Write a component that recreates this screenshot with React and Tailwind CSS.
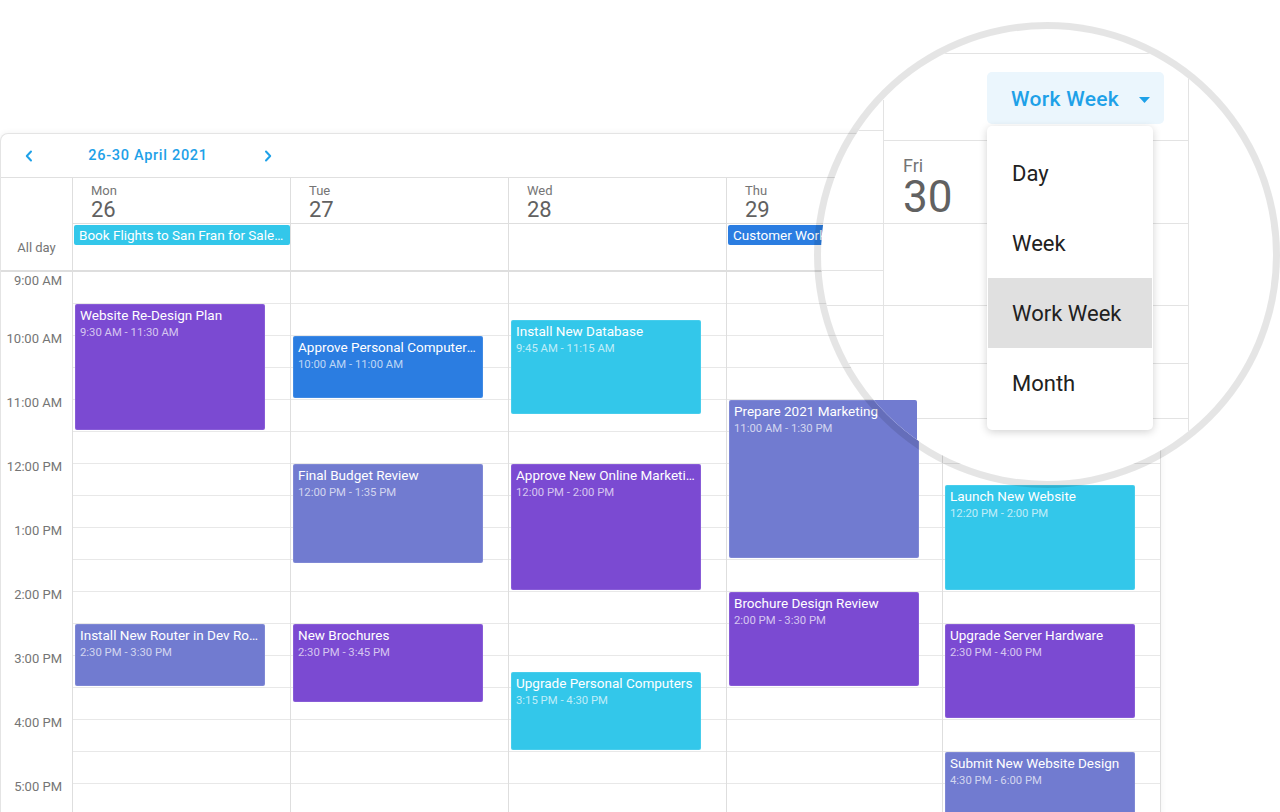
import React from "react";

const COLORS = {
  purple: "bg-[#7b4ad2]",
  indigo: "bg-[#717bd0]",
  cyan: "bg-[#33c7ea]",
  blue: "bg-[#2b7de1]",
};

const DAYS = [
  { name: "Mon", num: "26" },
  { name: "Tue", num: "27" },
  { name: "Wed", num: "28" },
  { name: "Thu", num: "29" },
  { name: "Fri", num: "30" },
];

const EVENTS = [
  { col: 0, title: "Website Re-Design Plan", time: "9:30 AM - 11:30 AM", s: 9.5, e: 11.5, c: "purple" },
  { col: 0, title: "Install New Router in Dev Room", time: "2:30 PM - 3:30 PM", s: 14.5, e: 15.5, c: "indigo" },
  { col: 1, title: "Approve Personal Computers Upgrade Plan", time: "10:00 AM - 11:00 AM", s: 10, e: 11, c: "blue" },
  { col: 1, title: "Final Budget Review", time: "12:00 PM - 1:35 PM", s: 12, e: 13 + 35 / 60, c: "indigo" },
  { col: 1, title: "New Brochures", time: "2:30 PM - 3:45 PM", s: 14.5, e: 15.75, c: "purple" },
  { col: 2, title: "Install New Database", time: "9:45 AM - 11:15 AM", s: 9.75, e: 11.25, c: "cyan" },
  { col: 2, title: "Approve New Online Marketing Strategy", time: "12:00 PM - 2:00 PM", s: 12, e: 14, c: "purple" },
  { col: 2, title: "Upgrade Personal Computers", time: "3:15 PM - 4:30 PM", s: 15.25, e: 16.5, c: "cyan" },
  { col: 3, title: "Prepare 2021 Marketing", time: "11:00 AM - 1:30 PM", s: 11, e: 13.5, c: "indigo" },
  { col: 3, title: "Brochure Design Review", time: "2:00 PM - 3:30 PM", s: 14, e: 15.5, c: "purple" },
  { col: 4, title: "Launch New Website", time: "12:20 PM - 2:00 PM", s: 12 + 20 / 60, e: 14, c: "cyan" },
  { col: 4, title: "Upgrade Server Hardware", time: "2:30 PM - 4:00 PM", s: 14.5, e: 16, c: "purple" },
  { col: 4, title: "Submit New Website Design", time: "4:30 PM - 6:00 PM", s: 16.5, e: 18, c: "indigo" },
];

const HOURS = ["9:00 AM", "10:00 AM", "11:00 AM", "12:00 PM", "1:00 PM", "2:00 PM", "3:00 PM", "4:00 PM", "5:00 PM", "6:00 PM"];

const GRID = "grid grid-cols-[72px_218px_218px_218px_216px_218px]";

function EventBox({ ev }) {
  return (
    <div
      className={`absolute left-[2px] w-[190px] ${COLORS[ev.c]} rounded-[2px] border border-white/10 px-[4px] pt-[2px] text-white overflow-hidden`}
      style={{ top: (ev.s - 9) * 64, height: (ev.e - ev.s) * 64 - 2 }}
    >
      <div className="truncate text-[13.5px] leading-[17px]">{ev.title}</div>
      <div className="mt-[2px] truncate text-[11.3px] leading-[14px] text-white/70">{ev.time}</div>
    </div>
  );
}

function Chevron({ dir }) {
  return (
    <svg width="8" height="12" viewBox="0 0 8 12" fill="none">
      {dir === "left" ? (
        <polyline points="6,1.5 1.8,6 6,10.5" stroke="#1ea1e8" strokeWidth="2" strokeLinecap="round" strokeLinejoin="round" />
      ) : (
        <polyline points="2,1.5 6.2,6 2,10.5" stroke="#1ea1e8" strokeWidth="2" strokeLinecap="round" strokeLinejoin="round" />
      )}
    </svg>
  );
}

export default function App() {
  return (
    <div className="relative h-[812px] w-[1280px] overflow-hidden bg-white font-['Roboto',sans-serif]">
      {/* Calendar card */}
      <div className="mt-[133px] w-[1161px] rounded-tl-[8px] border-l border-r border-t border-[#e4e4e4] bg-white shadow-[0_0_6px_rgba(0,0,0,0.06)]">
        {/* Toolbar */}
        <div className="flex h-[44px] items-center border-b border-[#e0e0e0]">
          <div className="flex w-[55px] justify-center">
            <Chevron dir="left" />
          </div>
          <div className="w-[184px] text-center text-[14.5px] font-medium tracking-[0.7px] text-[#1ea1e8]">26-30 April 2021</div>
          <div className="flex w-[56px] justify-center">
            <Chevron dir="right" />
          </div>
        </div>

        {/* Header + all day */}
        <div className={GRID}>
          <div className="row-span-2 flex flex-col justify-end border-b-2 border-r border-[#dedede] pb-[14px] text-center text-[13px] leading-[16px] text-[#757575]">
            All day
          </div>
          {DAYS.map((d) => (
            <div key={d.name} className="flex h-[46px] flex-col border-b border-r border-[#dedede] pl-[18px] pt-[5px]">
              <span className="text-[13px] leading-[16px] text-[#757575]">{d.name}</span>
              <span className="text-[22px] leading-[22px] text-[#616161]">{d.num}</span>
            </div>
          ))}
          {DAYS.map((d, i) => (
            <div key={d.name + "ad"} className="h-[48px] border-b-2 border-r border-[#dedede] pl-[1px] pt-[1px]">
              {i === 0 && (
                <div className="h-[20px] truncate rounded-[2px] bg-[#33c7ea] pl-[5px] pr-[6px] text-[13.5px] leading-[20px] text-white">
                  Book Flights to San Fran for Sales Trip
                </div>
              )}
              {i === 3 && (
                <div className="h-[20px] truncate rounded-[2px] bg-[#2b7de1] pl-[5px] text-[13.5px] leading-[20px] text-white">
                  Customer Workshop
                </div>
              )}
            </div>
          ))}
        </div>

        {/* Body */}
        <div className={GRID}>
          <div className="flex flex-col items-end border-r border-[#dedede] pr-[10px] pt-[1px] text-[13px] leading-[16px] text-[#757575]">
            {HOURS.map((h, i) => (
              <div key={h} className={i === 0 ? "" : i === 1 ? "mt-[42px]" : "mt-[48px]"}>
                {h}
              </div>
            ))}
          </div>
          {DAYS.map((d, ci) => (
            <div key={d.name + "body"} className="relative border-r border-[#dedede]">
              {Array.from({ length: 18 }).map((_, r) => (
                <div key={r} className="h-[32px] border-b border-[#e8e8e8]" />
              ))}
              {EVENTS.filter((e) => e.col === ci).map((ev) => (
                <EventBox key={ev.title} ev={ev} />
              ))}
            </div>
          ))}
        </div>
      </div>

      {/* Magnifier circle */}
      <div className="absolute left-[814px] top-[22px] h-[466px] w-[466px] overflow-hidden rounded-full border-[7px] border-[rgba(0,0,0,0.1)] bg-white bg-clip-padding">
        <div className="absolute left-[-821px] top-[-29px] h-[812px] w-[1280px]">
          {/* magnified grid */}
          <div className="absolute left-[800px] top-[53px] flex">
            <div className="mt-[47px] flex w-[83px] flex-col">
              <div className="h-[31px] border-b border-[#e3e3e3]" />
              <div className="h-[93px] border-b border-[#e3e3e3]" />
              <div className="h-[47px] border-b border-[#e3e3e3]" />
              <div className="h-[35px] border-b border-[#e3e3e3]" />
              <div className="h-[30px] border-b border-[#e3e3e3]" />
              <div className="h-[28px] border-b border-[#e3e3e3]" />
              <div className="h-[55px] border-b border-[#e3e3e3]" />
            </div>
            <div className="flex w-[306px] flex-col border-r border-t border-[#e3e3e3]">
              <div className="h-[46px]" />
              <div className="h-[41px] border-b border-l border-[#e3e3e3]" />
              <div className="h-[83px] border-b border-l border-[#e3e3e3]" />
              <div className="h-[82px] border-b border-l border-[#e3e3e3]" />
              <div className="h-[58px] border-b border-l border-[#e3e3e3]" />
              <div className="h-[55px] border-b border-l border-[#e3e3e3]" />
              <div className="h-[62px] border-l border-[#e3e3e3]" />
            </div>
          </div>

          {/* magnified marketing event */}
          <div className="absolute left-[728px] top-[400px] h-[158px] w-[189px] rounded-[2px] bg-[#717bd0] px-[5px] pt-[3px] text-white">
            <div className="whitespace-nowrap text-[13.5px] leading-[17px]">Prepare 2021 Marketing</div>
            <div className="mt-[2px] text-[11.3px] leading-[14px] text-white/70">11:00 AM - 1:30 PM</div>
          </div>

          {/* magnified Fri header */}
          <div className="absolute left-[903px] top-[156px] flex flex-col">
            <span className="text-[18px] leading-[20px] text-[#757575]">Fri</span>
            <span className="text-[44px] leading-[42px] text-[#616161]">30</span>
          </div>

          {/* view switcher */}
          <div className="absolute left-[987px] top-[72px] flex w-[177px] flex-col gap-[2px]">
            <div className="flex h-[52px] items-center rounded-[5px] bg-[#ebf6fd] pl-[24px] pt-[3px]">
              <span className="text-[21px] font-medium tracking-[0.3px] text-[#1ea1e8]">Work Week</span>
              <svg className="ml-[20px]" width="11" height="6" viewBox="0 0 11 6">
                <polygon points="0,0 11,0 5.5,6" fill="#1ea1e8" />
              </svg>
            </div>
            <div className="w-[166px] rounded-[5px] bg-white py-[12px] shadow-[0_2px_8px_rgba(0,0,0,0.18)]">
              {["Day", "Week", "Work Week", "Month"].map((it) => (
                <div
                  key={it}
                  className={`mx-[1px] flex h-[70px] items-center pl-[24px] text-[22px] text-[#212121] ${it === "Work Week" ? "bg-[#e0e0e0]" : ""}`}
                >
                  {it}
                </div>
              ))}
            </div>
          </div>
        </div>
      </div>
    </div>
  );
}
